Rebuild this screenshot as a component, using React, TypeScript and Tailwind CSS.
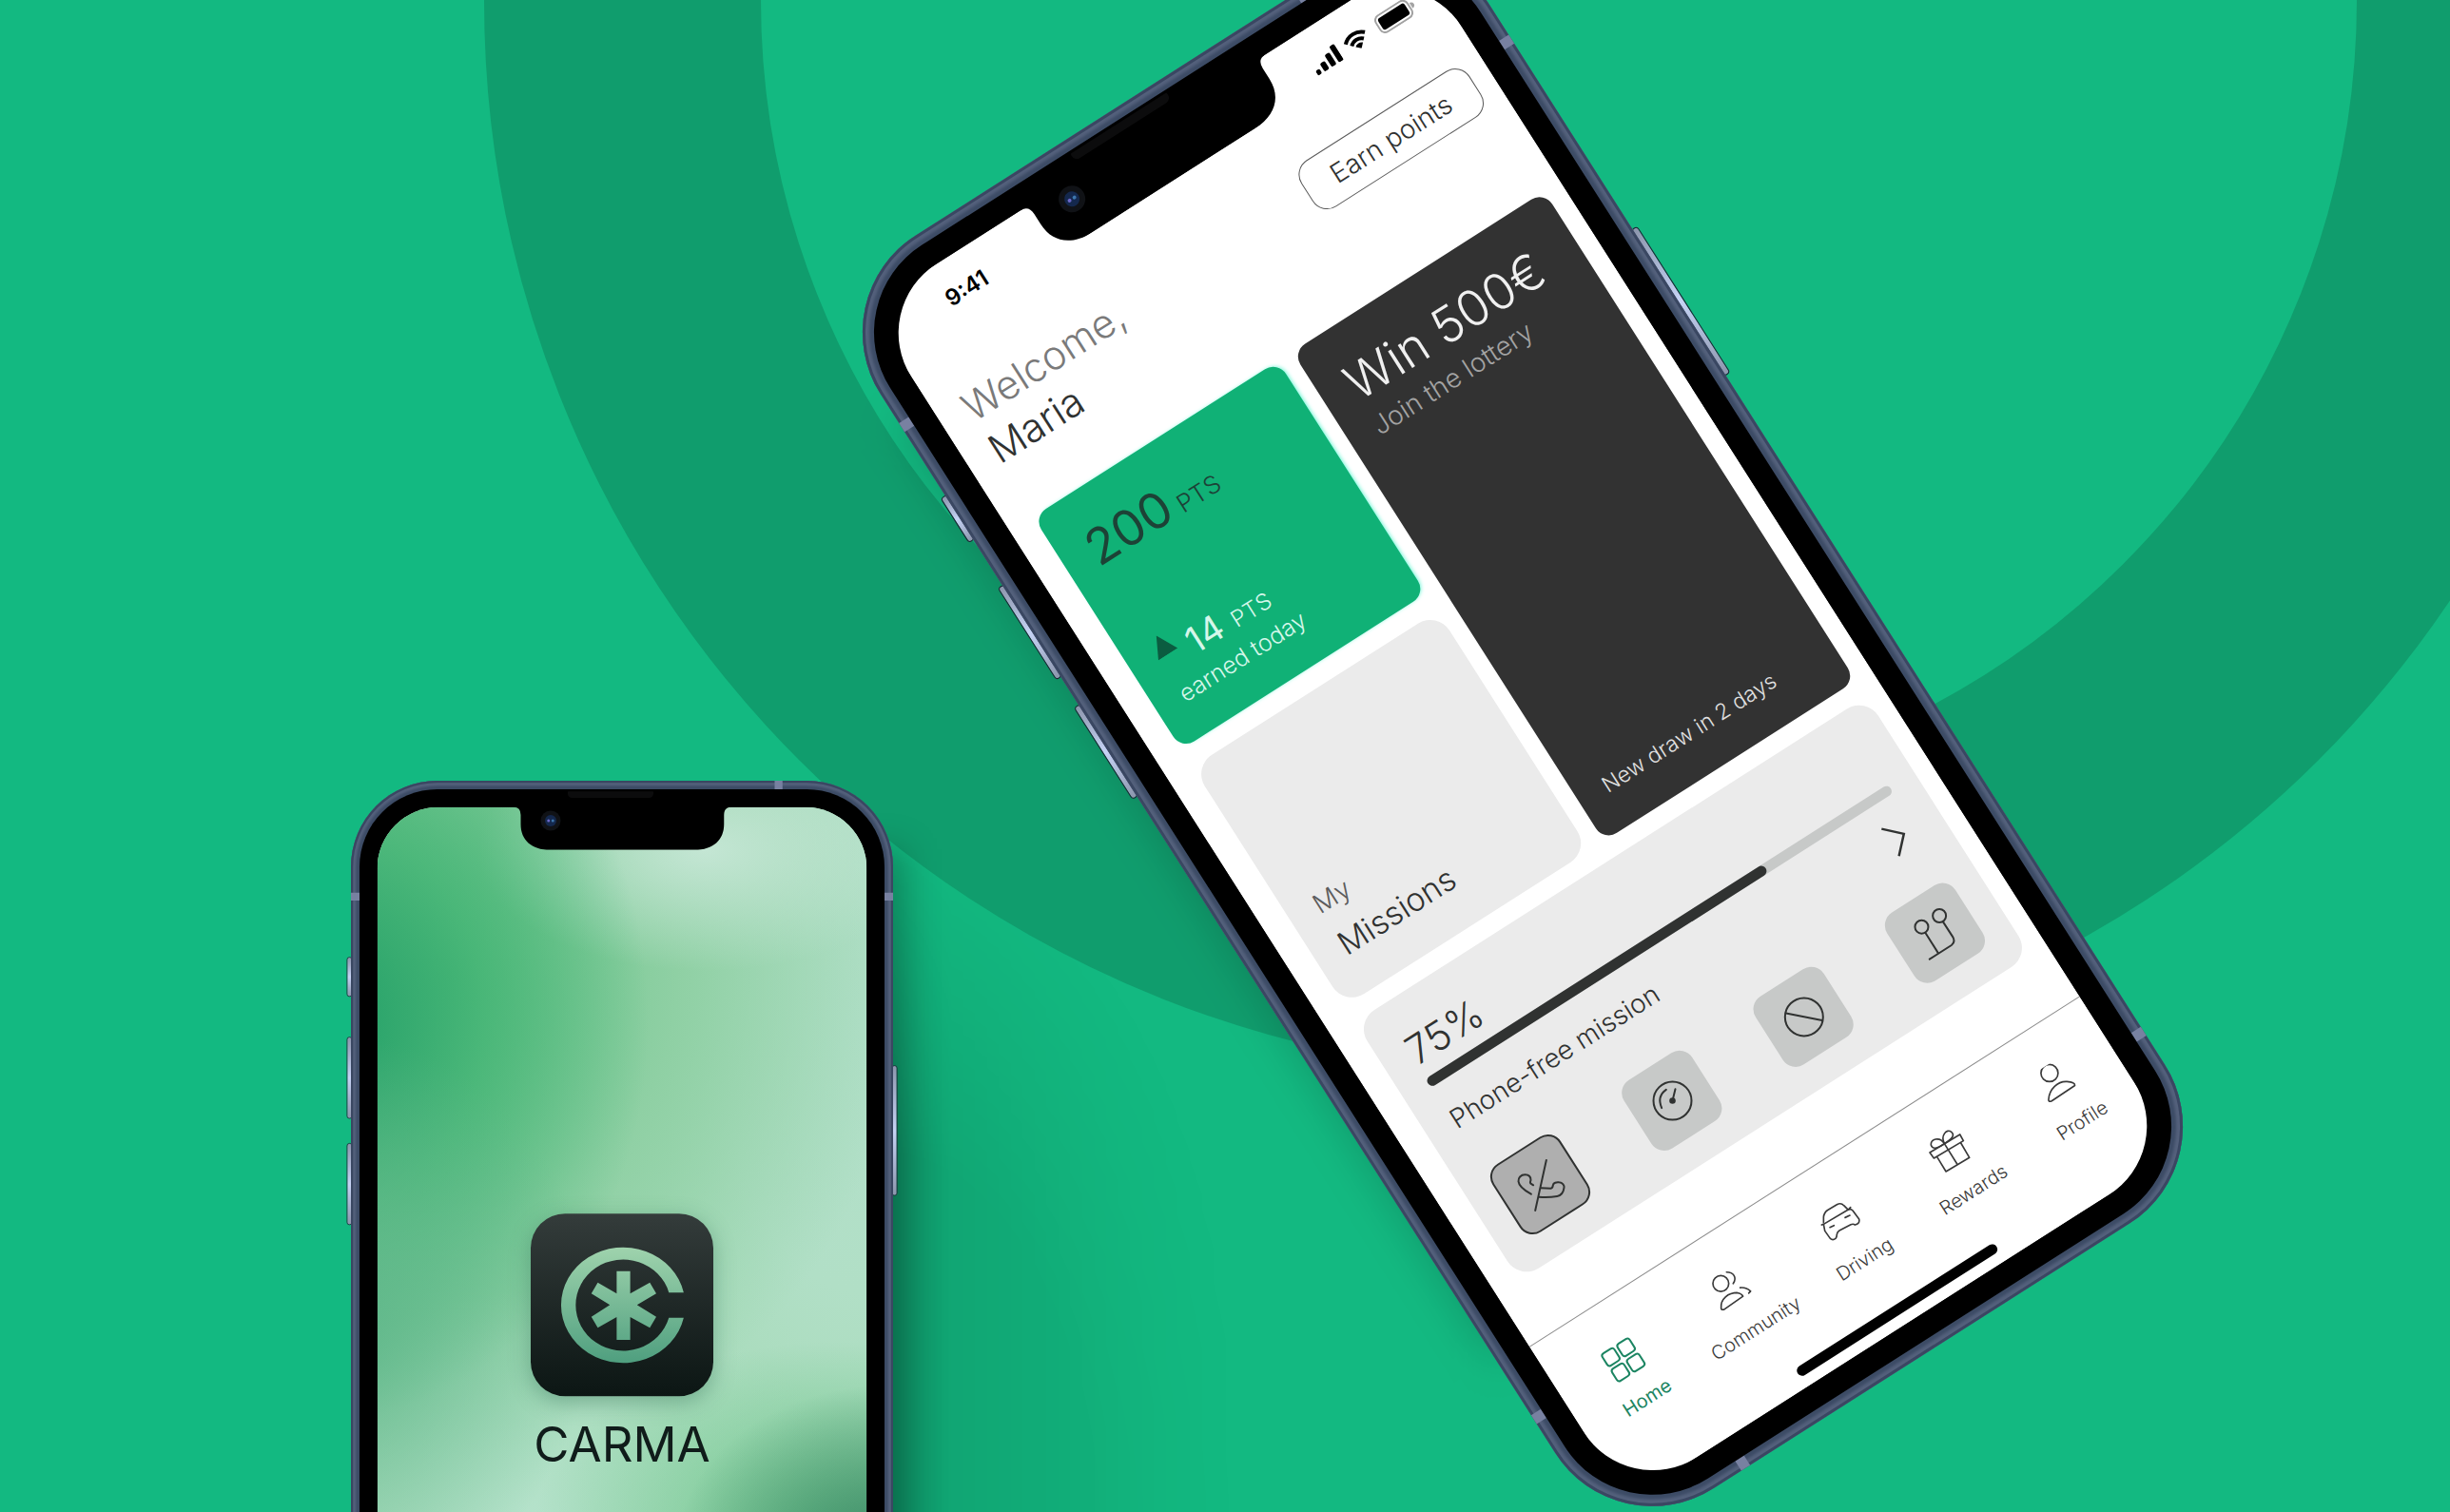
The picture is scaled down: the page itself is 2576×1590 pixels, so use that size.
import type { ReactNode } from "react";

/* Line icons are drawn on a tilted canvas, three units to the pixel, and turned back upright. */
function TiltedIcon({ cx, cy, size, children }: { cx: number; cy: number; size: "nav" | "tile"; children: ReactNode }) {
  return (
    <svg
      viewBox={size === "nav" ? "-66 -66 132 132" : "-90 -90 180 180"}
      className={size === "nav" ? "size-11" : "size-15"}
      fill="none"
      stroke="currentColor"
      strokeWidth={size === "nav" ? 5 : 6}
      strokeLinecap="round"
      strokeLinejoin="round"
      aria-hidden="true"
    >
      <g transform={`rotate(32.5) translate(${-cx} ${-cy})`}>{children}</g>
    </svg>
  );
}

function PhoneOffIcon() {
  return (
    <TiltedIcon size="tile" cx={205} cy={201}>
      <path d="M222 124 187 283" />
      <path d="M181 203 172 197Q170 193 173 187C173 174 164 170 155 170C141 170 133 180 134 191Q136 210 174 231" />
      <path d="M204 212 236 213Q242 212 243 203C244 195 254 193 262 194C274 195 279 203 278 211C276 226 271 236 256 238Q230 242 199 240" />
    </TiltedIcon>
  );
}

function GaugeIcon() {
  return (
    <TiltedIcon size="tile" cx={471} cy={476}>
      <circle cx="471" cy="476" r="60" />
      <circle cx="471" cy="476" r="7" fill="currentColor" />
      <path d="M471 476 480 439M451 441Q421 462 437 499" />
    </TiltedIcon>
  );
}

function BanIcon() {
  return (
    <TiltedIcon size="tile" cx={887} cy={211}>
      <circle cx="887" cy="211" r="60" />
      <path d="M830 199 944 222" />
    </TiltedIcon>
  );
}

function RouteIcon() {
  return (
    <TiltedIcon size="tile" cx={403} cy={605}>
      <circle cx="359" cy="585" r="21" />
      <circle cx="415" cy="550" r="21" />
      <path d="M371 604 410 666M427 570 458 618Q466 634 453 643L384 687" />
    </TiltedIcon>
  );
}

function HomeIcon() {
  return (
    <svg viewBox="0 0 44 44" className="size-11" fill="none" stroke="currentColor" strokeWidth="2" aria-hidden="true">
      <rect x="5" y="5" width="15" height="15" rx="3" />
      <rect x="24" y="5" width="15" height="15" rx="3" />
      <rect x="5" y="24" width="15" height="15" rx="3" />
      <rect x="24" y="24" width="15" height="15" rx="3" />
    </svg>
  );
}

function CommunityIcon() {
  return (
    <TiltedIcon size="nav" cx={671} cy={180}>
      <circle cx="637" cy="157" r="25" />
      <path d="M655 121C677 121 689 138 676 157" />
      <path d="M638 235C635 205 661 186 689 186Q702 188 707 197L647 239Q639 241 638 235Z" />
      <path d="M698 170Q717 168 731 181L725 187" />
    </TiltedIcon>
  );
}

function CarIcon() {
  return (
    <TiltedIcon size="nav" cx={230} cy={705}>
      <path d="M176 708V692Q177 678 188 670L218 652Q231 645 240 655L252 667" />
      <path d="M170 716 176 714 254 668 261 661" />
      <path d="M176 714 180 735 197 759Q205 766 214 759Q218 755 218 746Q219 738 226 734L262 715Q270 712 275 716Q291 713 288 698L268 671Q262 664 254 668" />
      <path d="M196 724 209 718M244 693 259 686" />
    </TiltedIcon>
  );
}

function GiftIcon() {
  return (
    <TiltedIcon size="nav" cx={570} cy={487}>
      <path d="M507 489 602 432 613 452 520 507Z" />
      <path d="M530 503 558 549 632 505 605 459M553 461 593 525" />
      <path d="M553 461Q518 486 511 466C508 446 538 437 553 461" />
      <path d="M553 461C540 436 560 412 575 424Q592 438 553 461" />
    </TiltedIcon>
  );
}

function ProfileIcon() {
  return (
    <TiltedIcon size="nav" cx={922} cy={270}>
      <circle cx="895" cy="239" r="27" />
      <path d="M892 323C894 288 922 264 950 266Q976 268 975 278L902 327Q892 331 892 323Z" />
    </TiltedIcon>
  );
}

function StatusIcons() {
  return (
    <div className="flex items-center gap-2">
      <svg viewBox="0 0 32 20" className="h-5 w-8" aria-hidden="true">
        <rect x="0" y="14" width="5" height="6" rx="2" />
        <rect x="8" y="10" width="6" height="10" rx="2" />
        <rect x="17" y="5" width="6" height="15" rx="2" />
        <rect x="26" y="0" width="6" height="20" rx="2" />
      </svg>
      <svg viewBox="0 0 28 20" className="h-5 w-7" fill="none" stroke="black" strokeWidth="4" aria-hidden="true">
        <path d="M2 7.500A17 17 0 0 1 26 7.500" />
        <path d="M6.500 12.500A10.500 10.500 0 0 1 21.500 12.500" />
        <path d="M14 20 9.500 15.500Q14 12 18.500 15.500Z" fill="black" stroke="none" />
      </svg>
      <svg viewBox="0 0 46 22" className="ml-1 h-[22px] w-[46px]" aria-hidden="true">
        <rect x="1" y="1" width="39" height="20" rx="6" fill="none" stroke="#a3a3a3" strokeWidth="2" />
        <rect x="4" y="4" width="33" height="14" rx="3" />
        <path d="M42 7.500Q45.500 8.500 45.500 11T42 14.500Z" fill="#a3a3a3" />
      </svg>
    </div>
  );
}

function Hardware() {
  const key =
    "absolute w-2 rounded-sm border border-[#1c2233] bg-linear-to-b from-[#8d96ad] via-[#c6d3f5] to-[#8d96ad]";
  return (
    <>
      <span className={`${key} -left-[6px] top-[247px] h-[56px]`} />
      <span className={`${key} -left-[6px] top-[359px] h-[115px]`} />
      <span className={`${key} -left-[6px] top-[508px] h-[115px]`} />
      <span className={`${key} -right-[6px] top-[399px] h-[183px]`} />
    </>
  );
}

function AntennaLines() {
  return (
    <>
      <span className="absolute left-0 top-[157px] h-[11px] w-3 bg-[#7881a1]" />
      <span className="absolute right-0 top-[157px] h-[11px] w-3 bg-[#7881a1]" />
      <span className="absolute bottom-[157px] left-0 h-[11px] w-3 bg-[#7881a1]" />
      <span className="absolute bottom-[157px] right-0 h-[11px] w-3 bg-[#7881a1]" />
      <span className="absolute right-[155px] top-0 h-3 w-[11px] bg-[#7881a1]" />
      <span className="absolute bottom-0 left-[155px] h-3 w-[11px] bg-[#7881a1]" />
    </>
  );
}

function Notch() {
  return (
    <div className="absolute inset-x-0 top-0 flex justify-center">
      <svg viewBox="0 0 305 82" className="-mt-[22px] h-[82px] w-[305px]" aria-hidden="true">
        <path d="M0 21H305V22Q295 22 295 33V46C295 68 280 82 254 82H51C25 82 10 68 10 46V33Q10 22 0 22Z" />
        <rect x="76" y="-4" width="120" height="13" rx="6" fill="#0c0c0d" />
        <circle cx="52" cy="41" r="14" fill="#101216" />
        <circle cx="52" cy="41" r="8" fill="#14284d" />
        <circle cx="49" cy="41" r="2" fill="#6c68c9" />
        <circle cx="55" cy="41" r="2" fill="#3d76ad" />
      </svg>
    </div>
  );
}

function Phone({ children }: { children: ReactNode }) {
  return (
    <div className="relative h-[1562px] w-[760px]">
      <Hardware />
      <div className="relative flex h-full rounded-[121px] bg-[#3d4c66] p-3 shadow-[inset_0_0_0_3px_#3a4762,inset_0_0_3px_7px_#54617c]">
        <AntennaLines />
        <div className="relative flex flex-1 rounded-[109px] bg-black p-[25px]">
          <div className="relative flex flex-1 overflow-hidden rounded-[86px]">{children}</div>
          <div className="absolute inset-x-0 top-[25px]">
            <Notch />
          </div>
        </div>
      </div>
    </div>
  );
}

function PointsCard() {
  return (
    <section className="flex flex-col justify-between rounded-2xl bg-[#10b176] px-[30px] pb-8 pt-[34px] shadow-[2px_0_4px_-1px_#6ff5d6]">
      <p className="text-[52px] font-normal leading-[60px] text-[#1d4236]">
        200<span className="ml-2 text-[26px] font-[350]">PTS</span>
      </p>
      <div className="text-[#d5f7ea]">
        <p className="flex items-baseline text-[38px] leading-[44px]">
          <svg viewBox="0 0 24 23" className="mr-3 h-[23px] w-6 -translate-y-4" aria-hidden="true">
            <path d="M12 0 24 23H0Z" fill="#0b5c40" />
          </svg>
          <span className="font-normal">14</span>
          <span className="ml-3 text-2xl font-light">PTS</span>
        </p>
        <p className="mt-1 text-[25px] leading-8">earned today</p>
      </div>
    </section>
  );
}

function LotteryCard() {
  return (
    <section className="row-span-2 flex flex-col justify-between rounded-2xl bg-[#323232] px-[30px] pb-8 pt-[34px]">
      <div>
        <h2 className="text-[52px] leading-[60px] text-[#f0f0f0]">Win 500€</h2>
        <p className="text-[28px] font-light leading-10 text-[#a3a3a3]">Join the lottery</p>
      </div>
      <p className="text-[23px] leading-8 text-[#e0e0e0]">New draw in 2 days</p>
    </section>
  );
}

function MissionsCard() {
  return (
    <section className="flex flex-col justify-end rounded-3xl bg-[#ebebeb] px-[30px] pb-[31px]">
      <p className="text-[28px] font-light leading-[52px] text-[#5c5c5c]">My</p>
      <h2 className="text-[34px] leading-[48px]">Missions</h2>
    </section>
  );
}

const missions = [
  { label: "Phone-free", icon: <PhoneOffIcon />, active: true },
  { label: "Speed", icon: <GaugeIcon />, active: false },
  { label: "Restrictions", icon: <BanIcon />, active: false },
  { label: "Route", icon: <RouteIcon />, active: false },
];

function MissionProgress() {
  const percent = 75;
  return (
    <section className="mt-5 rounded-3xl bg-[#ebebeb] px-[30px] pb-[31px] pt-[34px]">
      <p className="text-[42px] leading-[50px]">{percent}%</p>
      <div
        role="progressbar"
        aria-label="Phone-free mission"
        aria-valuenow={percent}
        aria-valuemin={0}
        aria-valuemax={100}
        className="mt-[6px] h-[11px] rounded-full bg-[#c7c9c8]"
      >
        <div className="h-full rounded-full bg-[#303231]" style={{ width: `${percent - 2}%` }} />
      </div>
      <div className="mt-[22px] flex items-center justify-between pr-3">
        <h3 className="text-[28px] font-light leading-10">Phone-free mission</h3>
        <button type="button" aria-label="Open mission">
          <svg viewBox="0 0 20 38" className="h-[38px] w-5" fill="none" stroke="currentColor" strokeWidth="2.500" aria-hidden="true">
            <path d="M1 2 18 19 1 36" />
          </svg>
        </button>
      </div>
      <div className="mt-[43px] flex justify-between">
        {missions.map((m) => (
          <button
            key={m.label}
            type="button"
            aria-label={m.label}
            aria-pressed={m.active}
            className={
              m.active
                ? "grid size-[85px] place-items-center rounded-2xl border-2 border-[#303231] bg-[#afafaf]"
                : "grid size-[85px] place-items-center rounded-2xl bg-[#c7c9c8]"
            }
          >
            {m.icon}
          </button>
        ))}
      </div>
    </section>
  );
}

const tabs = [
  { label: "Home", icon: <HomeIcon />, active: true },
  { label: "Community", icon: <CommunityIcon />, active: false },
  { label: "Driving", icon: <CarIcon />, active: false },
  { label: "Rewards", icon: <GiftIcon />, active: false },
  { label: "Profile", icon: <ProfileIcon />, active: false },
];

function TabBar() {
  return (
    <footer className="mt-auto flex flex-col items-center border-t border-[#8a8a8a] pb-3 pl-2 pt-[42px]">
      <nav className="grid w-full grid-cols-5">
        {tabs.map((t) => (
          <a
            key={t.label}
            href="#"
            aria-current={t.active ? "page" : undefined}
            className={
              t.active
                ? "flex flex-col items-center gap-[11px] text-xl font-normal text-[#1c8562]"
                : "flex flex-col items-center gap-[11px] text-xl text-[#3a3a3a]"
            }
          >
            {t.icon}
            {t.label}
          </a>
        ))}
      </nav>
      <div className="mt-11 h-[11px] w-[248px] rounded-full bg-black" />
    </footer>
  );
}

function DashboardScreen() {
  return (
    <main className="flex w-full flex-col bg-white font-[350] text-[#303231]">
      <div className="flex items-center justify-between pl-[75px] pr-[29px] pt-[23px] text-black">
        <time className="text-2xl font-semibold">9:41</time>
        <StatusIcons />
      </div>
      <header className="mt-[62px] flex h-[162px] items-start justify-between pl-[29px] pr-[21px]">
        <h1 className="pt-1 text-[42px] leading-[52px]">
          <span className="block font-light text-[#7a7a7a]">Welcome,</span>
          Maria
        </h1>
        <button type="button" className="h-[58px] w-[210px] rounded-[18px] border border-[#5a5a5a] text-[28px] font-light">
          Earn points
        </button>
      </header>
      <div className="flex flex-col pl-[29px] pr-[20px]">
        <div className="grid grid-cols-[305fr_313fr] grid-rows-[290px_298px] gap-x-[18px] gap-y-[22px]">
          <PointsCard />
          <LotteryCard />
          <MissionsCard />
        </div>
        <MissionProgress />
      </div>
      <TabBar />
    </main>
  );
}

function SplashScreen() {
  return (
    <div className="relative flex w-full flex-col items-center overflow-hidden bg-[#a4dab6] pt-[570px]">
      <div className="absolute inset-0 bg-[radial-gradient(300px_230px_at_720px_1040px,#3c8a67_0%,transparent_100%),radial-gradient(420px_260px_at_640px_1010px,#6fc58c_0%,transparent_100%),radial-gradient(360px_400px_at_-60px_720px,#5fb78a_0%,transparent_100%),radial-gradient(460px_560px_at_-80px_300px,#1f9d66_0%,#3cb271bb_50%,transparent_100%),radial-gradient(440px_320px_at_230px_1000px,#b5e2cb_0%,transparent_100%),radial-gradient(320px_170px_at_460px_60px,#c4e6d4_0%,transparent_100%),radial-gradient(640px_680px_at_100px_240px,#66c186_0%,#8fd0a4_50%,transparent_100%),radial-gradient(400px_760px_at_680px_300px,#b3e0ca_0%,#b1dfc6_50%,transparent_100%)]" />
      <div className="relative flex size-[256px] items-center justify-center rounded-[48px] bg-linear-to-b from-[#343c3b] to-[#0c1614] shadow-[0_8px_30px_#2a6a5066]">
        <svg viewBox="0 0 256 256" className="size-full" role="img" aria-label="Carma logo">
          <defs>
            <linearGradient id="mark" gradientUnits="userSpaceOnUse" x1="0" y1="47" x2="0" y2="209">
              <stop offset="0" stopColor="#9fd3ad" />
              <stop offset="1" stopColor="#4f9f7f" />
            </linearGradient>
          </defs>
          <g fill="url(#mark)">
            <path d="M214.500 110.500A87 81 0 1 0 214.500 146H193.700A66.600 64 0 1 1 193.700 110.500Z" />
            <path d="M120.500 80.500H139.500V112L167 96.500 176 112 149 128 176 144.500 167 160 139.500 145V177H120.500V145L94 160 85 144.500 111 128 85 112 94 96.500 120.500 112Z" />
          </g>
        </svg>
      </div>
      <p className="relative mt-6 text-[68px] leading-[84px] text-[#101c1a]">CARMA</p>
    </div>
  );
}

export default function App() {
  return (
    <div className="relative h-screen w-full overflow-hidden bg-[#13b981] font-['Inter',sans-serif]">
      <div className="absolute -bottom-10 left-[920px] top-[840px] w-[400px] bg-linear-to-r from-black/28 via-black/10 via-20% to-transparent [mask-image:radial-gradient(420px_760px_at_0_100%,black_55%,transparent_100%)]" />
      <div className="absolute -top-[1130px] left-[509px] size-[2260px] rounded-full border-[291px] border-[#109d6d]" />

      <div className="absolute left-[14.33%] top-[821px] origin-top-left scale-75">
        <div className="absolute -right-4 bottom-0 top-24 w-16 bg-black/25 blur-xl" />
        <Phone>
          <SplashScreen />
        </Phone>
      </div>

      <div className="absolute -top-[14px] left-[47.4%] rotate-[-32.5deg]">
        <div className="absolute bottom-60 left-0 top-40 w-10 bg-black/20 blur-xl" />
        <Phone>
          <DashboardScreen />
        </Phone>
      </div>
    </div>
  );
}
